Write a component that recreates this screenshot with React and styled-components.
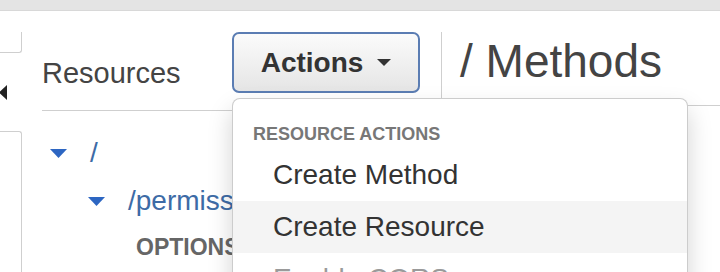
import React from "react";
import styled, { createGlobalStyle } from "styled-components";

const GlobalStyle = createGlobalStyle`
  html, body {
    margin: 0;
    padding: 0;
    height: 100%;
    overflow: hidden;
    background: #fff;
  }
  body {
    font-family: "Liberation Sans", Arial, Helvetica, sans-serif;
    color: #444;
  }
  #root { height: 100%; }
  * { box-sizing: border-box; }
`;

const Page = styled.div`
  display: flex;
  flex-direction: column;
  height: 100vh;
  overflow: hidden;
`;

const TopBar = styled.div`
  flex: 0 0 auto;
  height: 11px;
  background: #e4e4e4;
  border-bottom: 1px solid #d8d8d8;
`;

const Main = styled.div`
  flex: 1;
  display: flex;
  min-height: 0;
`;

const SideStrip = styled.div`
  flex: 0 0 22px;
  display: flex;
  flex-direction: column;
`;

const SideBox = styled.div`
  border-right: 1px solid #cfcfcf;
  ${({ $top }) =>
    $top
      ? `
    margin-top: 21px;
    height: 21px;
    border-bottom: 1px solid #cfcfcf;
    border-bottom-right-radius: 3px;
  `
      : `
    margin-top: 31px;
    flex: 1;
    border-top: 1px solid #cfcfcf;
    border-top-right-radius: 3px;
  `}
`;

const CollapseArrow = styled.svg`
  display: block;
  margin-top: 32px;
  width: 8px;
  height: 15px;
  overflow: visible;
`;

const ResourcePane = styled.div`
  flex: 0 0 419px;
  padding: 0 20px;
  position: relative;
`;

const PaneHeader = styled.div`
  display: flex;
  align-items: flex-start;
  padding: 21px 0 17px;
  border-bottom: 1px solid #cfcfcf;
`;

const Title = styled.h2`
  flex: 0 0 190px;
  margin: 24px 0 0;
  font-size: 29px;
  line-height: 34px;
  font-weight: normal;
  color: #444;
`;

const ActionsWrap = styled.div`
  position: relative;
`;

const ActionsButton = styled.button`
  width: 188px;
  height: 61px;
  padding: 0;
  display: flex;
  align-items: center;
  justify-content: center;
  gap: 14px;
  border: 2px solid #5b7db3;
  border-radius: 7px;
  background: linear-gradient(#fbfbfb, #e5e5e5);
  font-family: inherit;
  font-weight: bold;
  font-size: 28px;
  color: #333;
`;

const Menu = styled.div`
  position: absolute;
  top: calc(100% + 5px);
  left: 0;
  width: 456px;
  background: #fff;
  border: 1px solid rgba(0, 0, 0, 0.2);
  border-radius: 8px;
  box-shadow: 0 12px 24px rgba(0, 0, 0, 0.175);
  padding: 10px 0;
  z-index: 10;
`;

const MenuHeader = styled.div`
  padding: 12px 20px 2px;
  font-size: 18px;
  line-height: 26px;
  font-weight: bold;
  text-transform: uppercase;
  color: #777;
`;

const MenuItem = styled.div`
  padding: 0 40px;
  font-size: 28px;
  line-height: 52px;
  white-space: nowrap;
  color: ${({ $disabled }) => ($disabled ? "#9a9a9a" : "#333")};
  background: ${({ $active }) => ($active ? "#f4f4f4" : "transparent")};
`;

const Tree = styled.div`
  padding-top: 18px;
`;

const TreeRow = styled.div`
  display: flex;
  align-items: center;
  height: ${({ $h }) => $h || 48}px;
  padding-left: ${({ $indent }) => $indent}px;
  white-space: nowrap;
`;

const Toggle = styled.svg`
  display: block;
  flex: 0 0 17px;
  width: 17px;
  height: 9px;
  margin-right: 23px;
`;

const ResourceLink = styled.span`
  font-size: 28px;
  line-height: 48px;
  color: #3d6ba6;
`;

const MethodName = styled.span`
  font-size: 23px;
  line-height: 44px;
  font-weight: bold;
  color: #666;
`;

const MethodsPane = styled.div`
  flex: 1;
  margin-top: 21px;
  border-left: 1px solid #cfcfcf;
  min-width: 0;
`;

const MethodsHeader = styled.h1`
  margin: 0;
  padding: 2px 19px 17px 18px;
  border-bottom: 1px solid #cfcfcf;
  font-size: 46px;
  line-height: 54px;
  font-weight: normal;
  color: #444;
  white-space: nowrap;
`;

const Caret = () => (
  <svg width="14" height="7" viewBox="0 0 14 7" aria-hidden="true">
    <polygon points="0,0 14,0 7,7" fill="#333" />
  </svg>
);

const DownToggle = () => (
  <Toggle viewBox="0 0 17 9" aria-hidden="true">
    <polygon points="0,0 17,0 8.5,9" fill="#2d66c2" />
  </Toggle>
);

export default function App() {
  return (
    <>
      <GlobalStyle />
      <Page>
        <TopBar />
        <Main>
          <SideStrip>
            <SideBox $top />
            <CollapseArrow viewBox="0 0 8 15" aria-hidden="true">
              <polygon points="7,0 7,15 -1,7.5" fill="#222" />
            </CollapseArrow>
            <SideBox />
          </SideStrip>

          <ResourcePane>
            <PaneHeader>
              <Title>Resources</Title>
              <ActionsWrap>
                <ActionsButton>
                  Actions
                  <Caret />
                </ActionsButton>
                <Menu>
                  <MenuHeader>Resource Actions</MenuHeader>
                  <MenuItem>Create Method</MenuItem>
                  <MenuItem $active>Create Resource</MenuItem>
                  <MenuItem $disabled>Enable CORS</MenuItem>
                  <MenuItem>Edit Resource Documentation</MenuItem>
                </Menu>
              </ActionsWrap>
            </PaneHeader>
            <Tree>
              <TreeRow $indent={8}>
                <DownToggle />
                <ResourceLink>/</ResourceLink>
              </TreeRow>
              <TreeRow $indent={46}>
                <DownToggle />
                <ResourceLink>/permissions</ResourceLink>
              </TreeRow>
              <TreeRow $indent={94} $h={44}>
                <MethodName>OPTIONS</MethodName>
              </TreeRow>
            </Tree>
          </ResourcePane>

          <MethodsPane>
            <MethodsHeader>/ Methods</MethodsHeader>
          </MethodsPane>
        </Main>
      </Page>
    </>
  );
}
